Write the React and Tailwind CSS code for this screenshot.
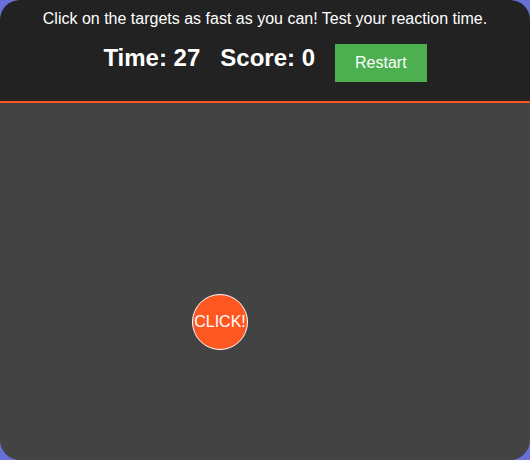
export default function App() {
  return (
    <div className="w-[530px] h-[460px] bg-[#6870d8]" style={{ fontFamily: '"Liberation Sans", Arial, sans-serif' }}>
      <div className="w-full h-full rounded-[20px] overflow-hidden flex flex-col">
        <div className="bg-[#222222] pt-[10px] pb-[19px] border-b-2 border-[#ff5722] text-white text-center">
          <p className="text-[16px] leading-[18px] mb-[16px]">Click on the targets as fast as you can! Test your reaction time.</p>
          <div className="flex justify-center items-start">
            <span className="mx-[10px] text-[24px] font-bold leading-[28px]">Time: 27</span>
            <span className="mx-[10px] text-[24px] font-bold leading-[28px]">Score: 0</span>
            <button className="mx-[10px] bg-[#4caf50] text-white text-[16px] leading-[18px] px-[20px] py-[10px]">Restart</button>
          </div>
        </div>
        <div className="flex-1 bg-[#434343] relative">
          <div className="absolute left-[192px] top-[191px] w-[56px] h-[56px] rounded-full bg-[#ff5722] border border-white flex items-center justify-center text-white text-[16px]">
            CLICK!
          </div>
        </div>
      </div>
    </div>
  );
}
